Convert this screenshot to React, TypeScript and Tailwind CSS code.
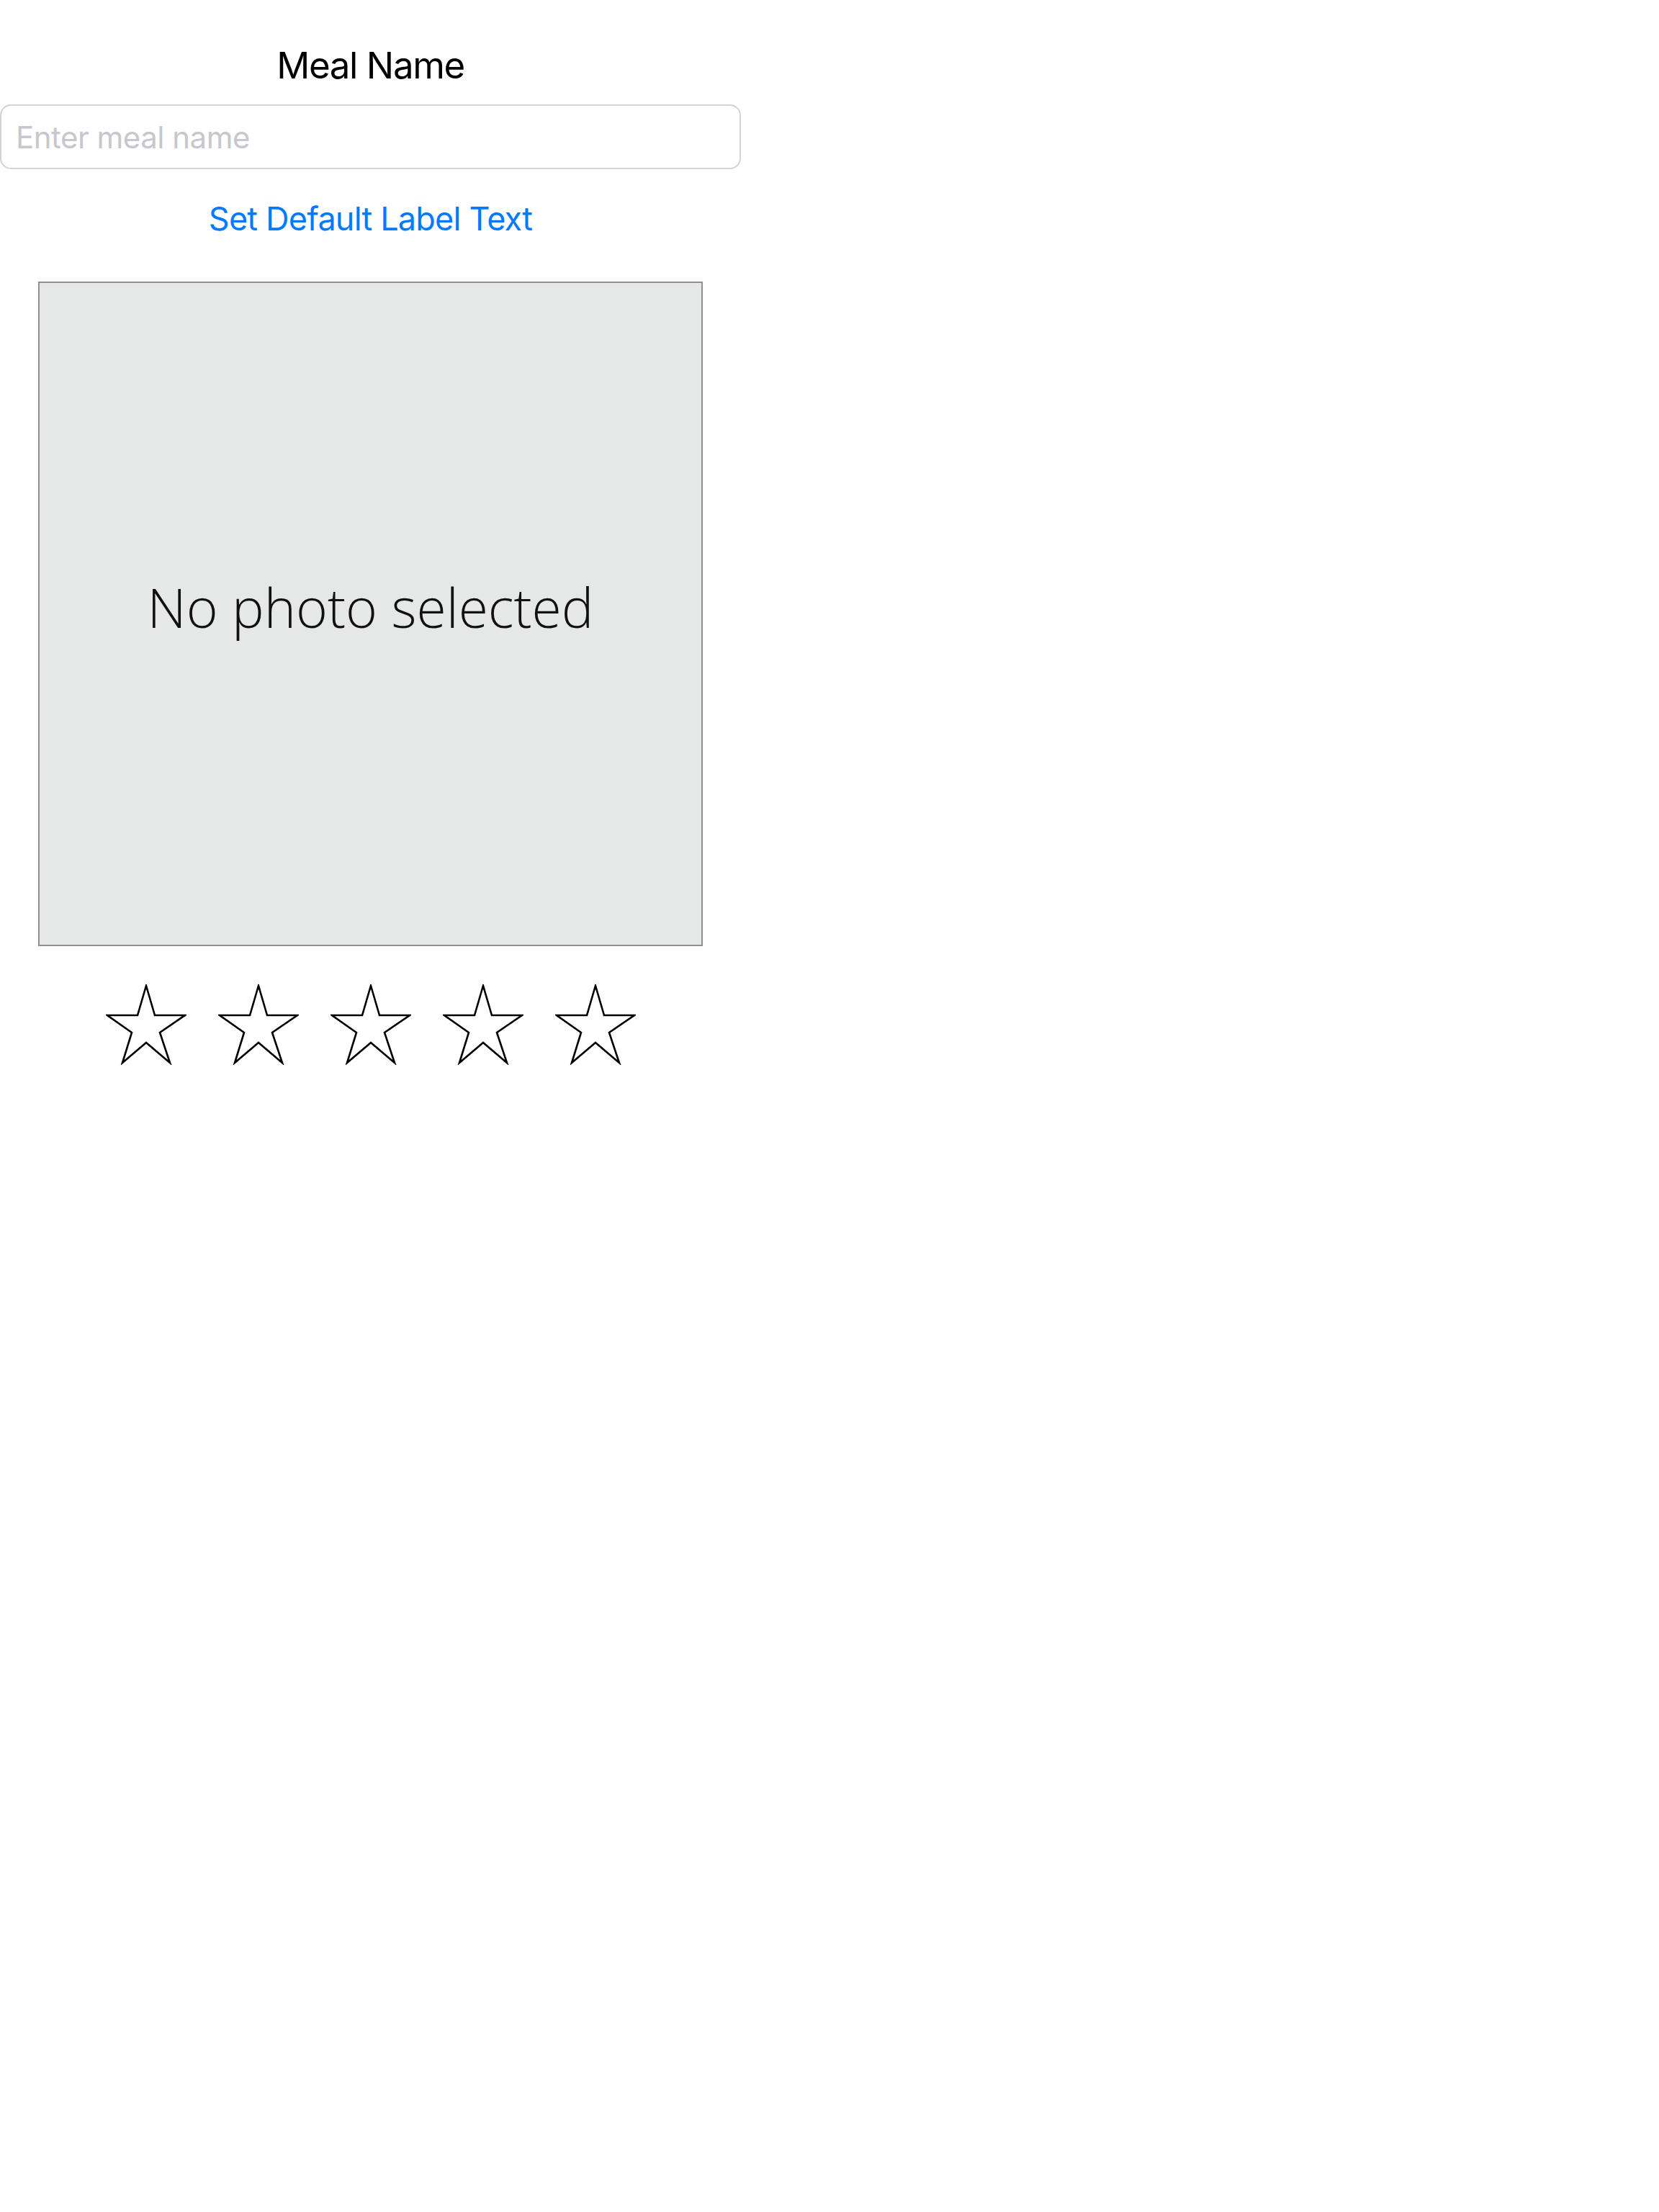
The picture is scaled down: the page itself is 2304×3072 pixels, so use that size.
import React from "react";

function Star() {
  return (
    <svg width="112" height="112" viewBox="-2 -2 112 112" fill="none">
      <polygon
        points="54,0 66,41 108,41 73,65 87,107 54,79 21,107 34,65 0,41 42,41"
        stroke="#000"
        strokeWidth="2.6"
        strokeLinejoin="miter"
        fill="#fff"
      />
    </svg>
  );
}

export default function App() {
  return (
    <div className="min-h-[3072px] w-[2304px] bg-white" style={{ fontFamily: "Inter, 'Noto Sans', sans-serif" }}>
      <div className="flex w-[1029px] flex-col items-center pt-[60px]">
        {/* label */}
        <div className="h-[61px] text-[51px] leading-[61px] tracking-[-1.4px] text-black">Meal Name</div>

        {/* text field */}
        <div className="mt-[24px] flex h-[90px] w-[1029px] items-center rounded-[15px] border-2 border-[#d3d3d3] pl-[20px]">
          <input
            className="w-full bg-transparent text-[42px] tracking-[-0.5px] text-black outline-none placeholder:text-[#c7c7cd]"
            placeholder="Enter meal name"
          />
        </div>

        {/* button */}
        <button className="mt-[24px] h-[90px] text-[45px] leading-[90px] tracking-[-0.8px] text-[#007aff]">
          Set Default Label Text
        </button>

        {/* photo */}
        <div className="mt-[42px] flex h-[923px] w-[923px] items-center justify-center border-2 border-[#8f8f8f] bg-[#e6e7e7]">
          <span
            className="pb-[18px] text-[75px] font-light text-[#111]"
            style={{ fontFamily: "'Open Sans', sans-serif" }}
          >
            No photo selected
          </span>
        </div>

        {/* rating */}
        <div className="mt-[43px] flex gap-[24px]">
          {[0, 1, 2, 3, 4].map((i) => (
            <button key={i} className="flex h-[132px] w-[132px] items-center justify-center">
              <Star />
            </button>
          ))}
        </div>
      </div>
    </div>
  );
}
